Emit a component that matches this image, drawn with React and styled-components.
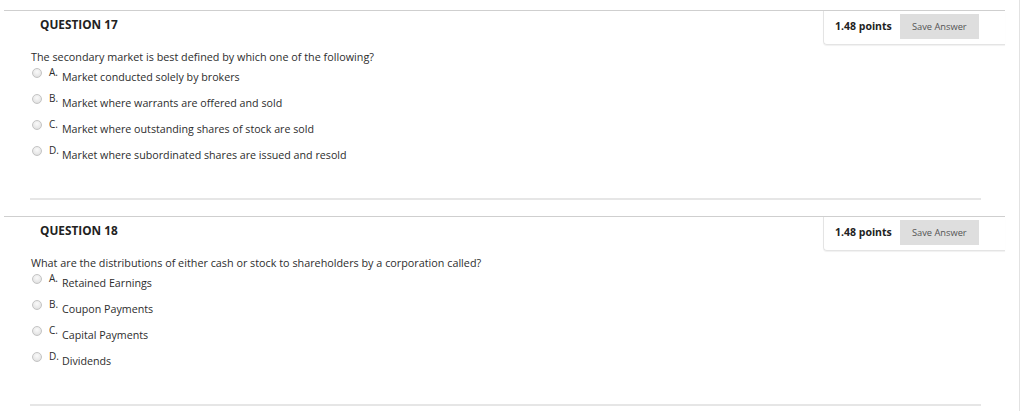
import React from 'react'
import styled, { createGlobalStyle } from 'styled-components'

const GlobalStyle = createGlobalStyle`
  html, body {
    margin: 0;
    padding: 0;
    background: #fff;
  }
  body {
    font-family: "Open Sans", "Noto Sans", sans-serif;
    color: #333;
  }
`

const questions = [
  {
    number: 17,
    points: '1.48 points',
    text: 'The secondary market is best defined by which one of the following?',
    options: [
      'Market conducted solely by brokers',
      'Market where warrants are offered and sold',
      'Market where outstanding shares of stock are sold',
      'Market where subordinated shares are issued and resold',
    ],
  },
  {
    number: 18,
    points: '1.48 points',
    text: 'What are the distributions of either cash or stock to shareholders by a corporation called?',
    options: ['Retained Earnings', 'Coupon Payments', 'Capital Payments', 'Dividends'],
  },
]

const Page = styled.div`
  width: 1020px;
  min-height: 411px;
  box-sizing: border-box;
  border-right: 1px solid #e2e2e2;
  padding: 10px 0 0 4px;
`

const Block = styled.section`
  width: 1001px;
  border-top: 1px solid #cfcfcf;
  margin-bottom: 16px;
`

const Header = styled.div`
  display: flex;
  justify-content: space-between;
  align-items: flex-start;
  height: 35px;
`

const Heading = styled.h3`
  margin: 0;
  padding: 5px 0 0 36px;
  font-size: 11.8px;
  line-height: 16px;
  font-weight: 700;
  color: #222;
`

const PointsBox = styled.div`
  display: flex;
  align-items: flex-start;
  gap: 8px;
  width: 182px;
  height: 34px;
  box-sizing: border-box;
  padding: 3px 0 0 11px;
  border-left: 1px solid #e4e4e4;
  border-bottom: 1px solid #e4e4e4;
  border-bottom-left-radius: 4px;
  box-shadow: 0 1px 1px rgba(0, 0, 0, 0.06);
`

const Points = styled.span`
  font-size: 10.5px;
  line-height: 25px;
  font-weight: 700;
  color: #222;
  white-space: nowrap;
`

const SaveButton = styled.button`
  height: 25px;
  width: 79px;
  padding: 0;
  border: none;
  background: #dedede;
  color: #555;
  font-family: "Open Sans", "Noto Sans", sans-serif;
  font-size: 9.3px;
`

const Body = styled.div`
  padding: 3px 0 0 27px;
`

const QuestionText = styled.p`
  margin: 0;
  font-size: 10.8px;
  line-height: 15px;
  color: #2d2d2d;
`

const OptionList = styled.ul`
  list-style: none;
  margin: 0;
  padding: 0 0 0 1px;
`

const Option = styled.li`
  display: flex;
  align-items: center;
  height: 26px;
`

const Radio = styled.span`
  width: 10px;
  height: 10px;
  box-sizing: border-box;
  border-radius: 50%;
  border: 1px solid #c4c4c4;
  background: radial-gradient(circle at 50% 35%, #fafafa 0%, #e8e8e8 60%, #d6d6d6 100%);
  margin: 0 7px 8px 0;
  flex-shrink: 0;
`

const Letter = styled.span`
  font-size: 10px;
  line-height: 12px;
  color: #2d2d2d;
  width: 13px;
  margin-bottom: 11px;
`

const OptionText = styled.span`
  font-size: 10.7px;
  line-height: 15px;
  color: #2d2d2d;
`

const Footer = styled.div`
  margin: 30px 0 0 -1px;
  width: 951px;
  border-top: 2px solid #e6e6e6;
`

const letters = ['A.', 'B.', 'C.', 'D.']

const App = () => {
  return (
    <>
      <GlobalStyle />
      <Page>
        {questions.map((q) => (
          <Block key={q.number}>
            <Header>
              <Heading>QUESTION {q.number}</Heading>
              <PointsBox>
                <Points>{q.points}</Points>
                <SaveButton>Save Answer</SaveButton>
              </PointsBox>
            </Header>
            <Body>
              <QuestionText>{q.text}</QuestionText>
              <OptionList>
                {q.options.map((opt, i) => (
                  <Option key={opt}>
                    <Radio />
                    <Letter>{letters[i]}</Letter>
                    <OptionText>{opt}</OptionText>
                  </Option>
                ))}
              </OptionList>
              <Footer />
            </Body>
          </Block>
        ))}
      </Page>
    </>
  )
}

export default App
